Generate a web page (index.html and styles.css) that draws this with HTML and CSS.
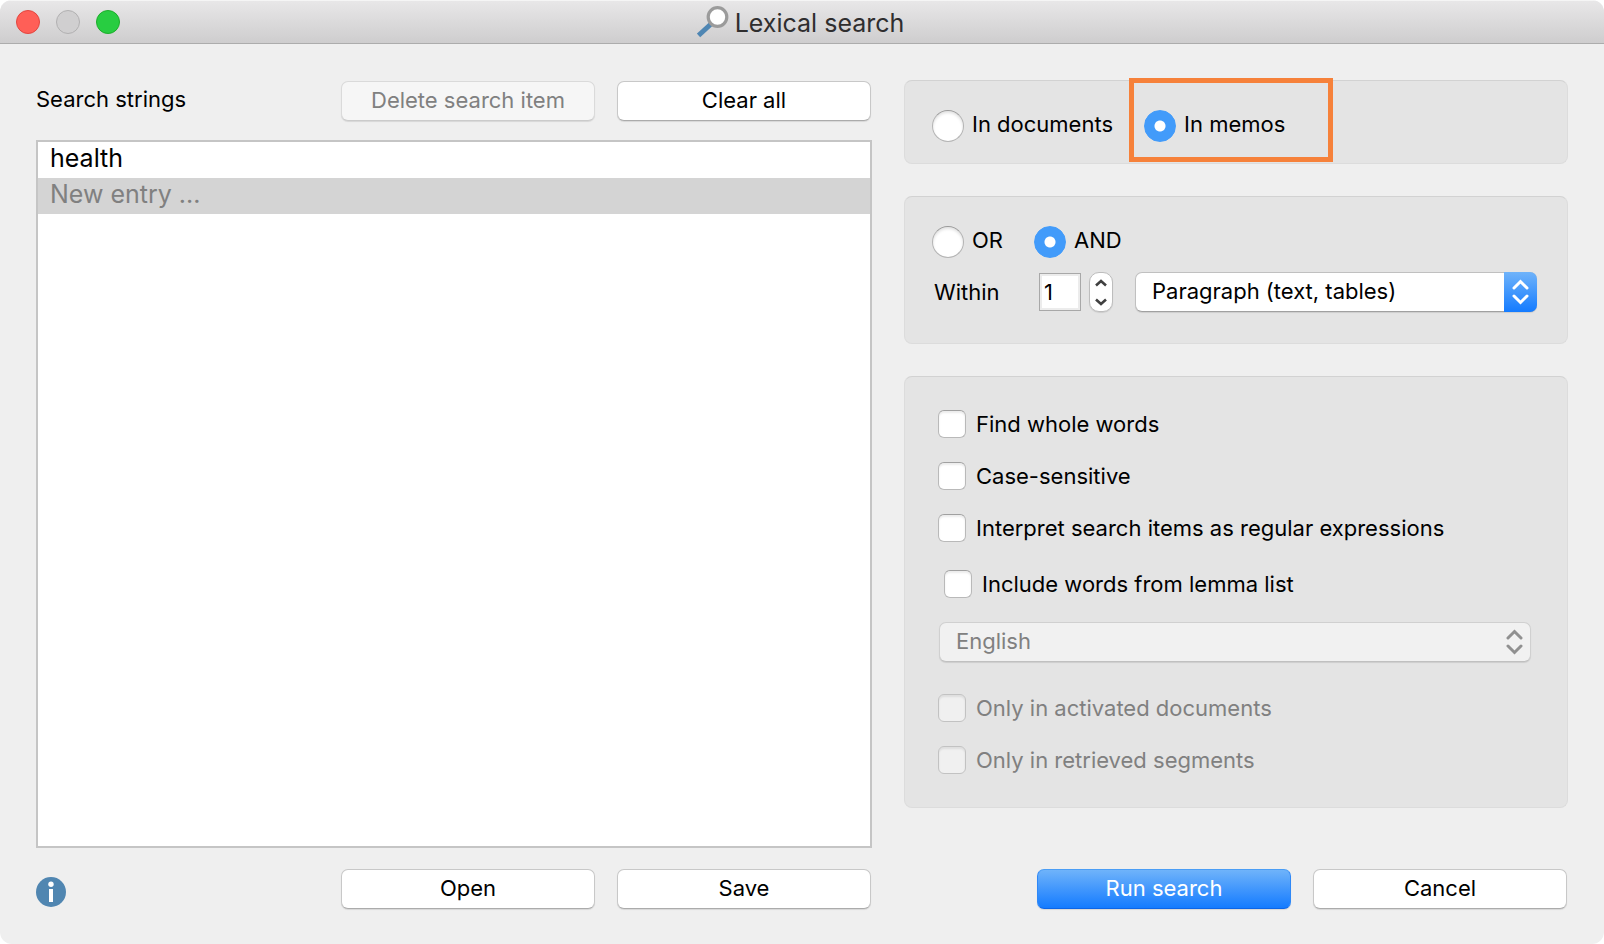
FILE: index.html
```html
<!DOCTYPE html>
<html lang="en">
<head>
<meta charset="UTF-8">
<meta name="viewport" content="width=device-width, initial-scale=1.0">
<title>Lexical search</title>
<link rel="stylesheet" href="styles.css">
</head>
<body>

<form class="dialog">
  <header class="titlebar">
    <div class="lights">
      <button type="button" class="light close" aria-label="Close"></button>
      <button type="button" class="light minimize" aria-label="Minimize" disabled></button>
      <button type="button" class="light zoom" aria-label="Zoom"></button>
    </div>
    <h1 class="title">
      <svg width="32" height="32" viewBox="0 0 32 32" aria-hidden="true">
        <path d="M1.5 29.5 L14 18" stroke="#4f86b3" stroke-width="5" fill="none"/>
        <circle cx="20.5" cy="11" r="9.3" fill="#fff" stroke="#9b9b9b" stroke-width="3.2"/>
      </svg>
      <span>Lexical search</span>
    </h1>
  </header>

  <main class="content">
    <section class="strings">
      <div class="button-row">
        <h2 class="heading">Search strings</h2>
        <button type="button" class="btn" disabled>Delete search item</button>
        <button type="button" class="btn">Clear all</button>
      </div>
      <ul class="list">
        <li>health</li>
        <li class="new-entry">New entry ...</li>
      </ul>
    </section>

    <section class="options">
      <div class="panel scope">
        <div class="radios">
          <label class="radio"><input type="radio" name="scope"><span>In documents</span></label>
          <label class="radio highlight"><input type="radio" name="scope" checked><span>In memos</span></label>
        </div>
      </div>

      <div class="panel logic">
        <div class="radios">
          <label class="radio"><input type="radio" name="logic"><span>OR</span></label>
          <label class="radio"><input type="radio" name="logic" checked><span>AND</span></label>
        </div>
        <div class="within">
          <label class="within-label" for="distance">Within</label>
          <input type="text" id="distance" class="distance" value="1">
          <div class="stepper">
            <button type="button" aria-label="Increase">
              <svg width="12" height="8" viewBox="0 0 12 8"><path d="M1 6.5 L6 2 L11 6.5"/></svg>
            </button>
            <button type="button" aria-label="Decrease">
              <svg width="12" height="8" viewBox="0 0 12 8"><path d="M1 1.5 L6 6 L11 1.5"/></svg>
            </button>
          </div>
          <div class="select active">
            <select aria-label="Unit">
              <option>Paragraph (text, tables)</option>
            </select>
            <span class="arrows">
              <svg width="17" height="26" viewBox="0 0 17 26"><path d="M2 9 L8.5 2.5 L15 9 M2 17 L8.5 23.5 L15 17"/></svg>
            </span>
          </div>
        </div>
      </div>

      <div class="panel filters">
        <label class="check"><input type="checkbox"><span>Find whole words</span></label>
        <label class="check"><input type="checkbox"><span>Case-sensitive</span></label>
        <label class="check"><input type="checkbox"><span>Interpret search items as regular expressions</span></label>
        <div class="lemma">
          <label class="check"><input type="checkbox"><span>Include words from lemma list</span></label>
          <div class="select">
            <select aria-label="Language" disabled>
              <option>English</option>
            </select>
            <span class="arrows">
              <svg width="17" height="26" viewBox="0 0 17 26"><path d="M2 9 L8.5 2.5 L15 9 M2 17 L8.5 23.5 L15 17"/></svg>
            </span>
          </div>
        </div>
        <label class="check disabled"><input type="checkbox" disabled><span>Only in activated documents</span></label>
        <label class="check disabled"><input type="checkbox" disabled><span>Only in retrieved segments</span></label>
      </div>
    </section>

    <div class="button-row">
      <button type="button" class="info" aria-label="Help">
        <svg width="30" height="30" viewBox="0 0 30 30">
          <circle cx="15" cy="15" r="15" fill="#5086b1"/>
          <circle cx="15" cy="7.2" r="2.7" fill="#fff"/>
          <rect x="13" y="12" width="4" height="13" fill="#fff"/>
        </svg>
      </button>
      <button type="button" class="btn">Open</button>
      <button type="button" class="btn">Save</button>
    </div>
    <div class="button-row">
      <button type="submit" class="btn primary">Run search</button>
      <button type="button" class="btn">Cancel</button>
    </div>
  </main>
</form>

</body>
</html>
```
FILE: styles.css
```css
*,
*::after {
  box-sizing: border-box;
}

body {
  margin: 0;
  background-color: #fff;
  color: #000;
  font-family: Inter, "Liberation Sans", sans-serif;
  font-size: 22px;
  line-height: 28px;
}

button,
input,
select {
  margin: 0;
  font: inherit;
  color: inherit;
}

.dialog {
  display: flex;
  flex-direction: column;
  min-height: 100vh;
  background-color: #efefef;
  border-radius: 12px;
  overflow: hidden;
}

/* Title bar */
.titlebar {
  display: grid;
  grid-template-columns: 1fr auto 1fr;
  align-items: center;
  height: 44px;
  padding: 0 16px;
  background: linear-gradient(#e8e7e8, #cecdce);
  border-top: 1px solid #f5f5f5;
  border-bottom: 1px solid #acacac;
}

.lights {
  display: flex;
  gap: 16px;
}

.light {
  width: 24px;
  height: 24px;
  padding: 0;
  border: 1px solid;
  border-radius: 50%;
}

.close {
  background-color: #ff5f57;
  border-color: #e2463f;
}

.minimize {
  background-color: #d0cfd0;
  border-color: #b1b0b1;
}

.zoom {
  background-color: #28cd41;
  border-color: #1dad2b;
}

.title {
  display: flex;
  align-items: center;
  gap: 6px;
  margin: 0;
  padding-right: 3px;
  font-size: 25px;
  font-weight: normal;
  color: #2f2e2f;
}

.title span {
  padding-top: 2px;
}

/* Body of the dialog */
.content {
  flex: 1;
  display: grid;
  grid-template-columns: 209fr 166fr;
  grid-template-rows: 1fr auto;
  gap: 21px 32px;
  padding: 36px 36px 35px;
}

.strings {
  display: flex;
  flex-direction: column;
  gap: 19px;
  padding-top: 1px;
}

.button-row {
  display: flex;
  justify-content: flex-end;
  align-items: flex-end;
  gap: 22px;
  padding-right: 1px;
}

.heading {
  align-self: center;
  margin: 0 auto 0 0;
  padding-bottom: 4px;
  font-size: 22px;
  font-weight: normal;
}

.btn {
  width: 254px;
  height: 40px;
  padding: 0 8px 2px;
  background-color: #fff;
  border: 1px solid #c8c8c8;
  border-bottom-color: #ababab;
  border-radius: 7px;
  box-shadow: 0 1px 1px rgba(0, 0, 0, 0.1);
}

.btn:disabled {
  background-color: #f6f6f6;
  border-color: #dadada;
  border-bottom-color: #cbcbcb;
  color: #808080;
}

.btn.primary {
  background: linear-gradient(#6fb3fa, #147bff);
  border-color: #4a9df5 #2f88f7 #0d65e6;
  color: #fff;
}

.list {
  flex: 1;
  margin: 0;
  padding: 0;
  list-style: none;
  background-color: #fff;
  border: 2px solid #c5c5c5;
  font-size: 25px;
}

.list li {
  height: 36px;
  padding: 0 12px;
  line-height: 33px;
}

.list .new-entry {
  background-color: #d4d4d4;
  color: #808080;
}

.info {
  margin-right: auto;
  padding: 0 0 2px;
  border: none;
  background: none;
  line-height: 0;
}

/* Option panels */
.options {
  display: flex;
  flex-direction: column;
  gap: 32px;
}

.panel {
  background-color: #e4e4e4;
  border: 1px solid #dcdcdc;
  border-top-color: #d2d2d2;
  border-radius: 8px;
}

.scope {
  padding: 29px 27px 21px;
}

.logic {
  display: flex;
  flex-direction: column;
  gap: 14px;
  padding: 29px 30px 31px 27px;
}

.radios {
  display: flex;
  gap: 31px;
}

.radio {
  position: relative;
  display: flex;
  align-items: center;
  gap: 8px;
}

.radio span {
  padding-bottom: 4px;
}

.radio input {
  appearance: none;
  width: 32px;
  height: 32px;
  background-color: #fff;
  border: 1px solid #b4b4b4;
  border-top-color: #999;
  border-radius: 50%;
  box-shadow: inset 0 2px 3px rgba(0, 0, 0, 0.12);
}

.radio input:checked {
  background: radial-gradient(circle, #fff 5px, #429bfa 6px);
  border-color: #429bfa;
  box-shadow: none;
}

.highlight::after {
  content: "";
  position: absolute;
  top: -32px;
  left: -15px;
  width: 204px;
  height: 84px;
  border: 5px solid #f6813a;
  pointer-events: none;
}

.within {
  display: flex;
  align-items: center;
}

.within-label {
  width: 107px;
  padding-left: 2px;
}

.distance {
  width: 42px;
  height: 38px;
  padding: 0 4px;
  background-color: #fff;
  border: 1px solid #a8a8a8;
  box-shadow: inset 0 0 0 2px #ececec;
}

.stepper {
  display: flex;
  flex-direction: column;
  width: 24px;
  height: 40px;
  margin: 0 22px 0 8px;
  background-color: #fff;
  border: 1px solid #bdbdbd;
  border-radius: 10px;
  box-shadow: 0 1px 1px rgba(0, 0, 0, 0.1);
}

.stepper button {
  flex: 1;
  display: flex;
  align-items: center;
  justify-content: center;
  padding: 2px 0;
  border: none;
  background: none;
}

.stepper path {
  fill: none;
  stroke: #404040;
  stroke-width: 2.6;
}

.select {
  position: relative;
  flex: 1;
}

.select select {
  appearance: none;
  display: block;
  width: 100%;
  height: 40px;
  padding: 0 40px 2px 16px;
  background-color: #fff;
  border: 1px solid #c0c0c0;
  border-bottom-color: #a0a0a0;
  border-radius: 7px;
  box-shadow: 0 1px 1px rgba(0, 0, 0, 0.1);
}

.select select:disabled {
  background-color: #f1f1f1;
  border-color: #d0d0d0;
  border-bottom-color: #c0c0c0;
  color: #808080;
  opacity: 1;
}

.arrows {
  position: absolute;
  top: 0;
  right: 0;
  display: flex;
  align-items: center;
  justify-content: center;
  width: 33px;
  height: 40px;
  border-radius: 0 7px 7px 0;
  pointer-events: none;
}

.arrows path {
  fill: none;
  stroke: #909090;
  stroke-width: 3;
  stroke-linecap: round;
}

.active .arrows {
  background: linear-gradient(#6fb3fa, #147bff);
}

.active .arrows path {
  stroke: #fff;
}

.filters {
  display: flex;
  flex-direction: column;
  gap: 24px;
  padding: 33px 36px 33px 33px;
}

.check {
  display: flex;
  align-items: center;
  gap: 10px;
}

.check input {
  appearance: none;
  width: 28px;
  height: 28px;
  background-color: #fff;
  border: 1px solid #b9b9b9;
  border-top-color: #a0a0a0;
  border-radius: 6px;
  box-shadow: inset 0 2px 2px rgba(0, 0, 0, 0.08);
}

.check.disabled {
  color: #808080;
}

.check.disabled input {
  background-color: #f0f0f0;
  border-color: #c2c2c2;
}

.lemma {
  display: flex;
  flex-direction: column;
  gap: 24px;
  margin: 4px 0 8px 1px;
}

.lemma .check {
  margin-left: 5px;
}
```
